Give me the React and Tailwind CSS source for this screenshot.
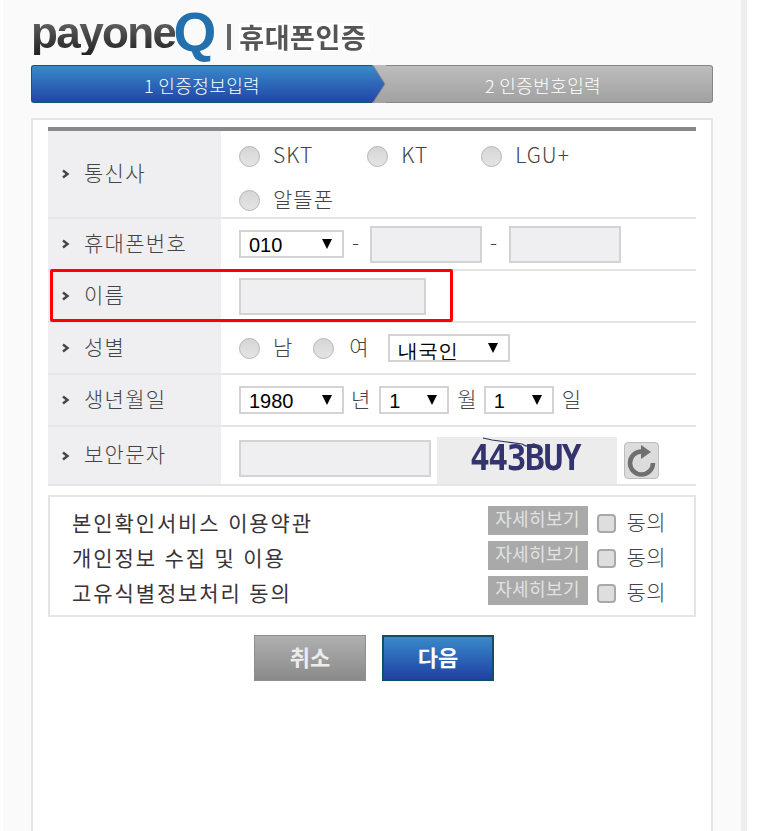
import React from 'react';

const KR = "font-['Noto_Sans_CJK_KR','Liberation_Sans',sans-serif]";

const Radio = () => (
  <span className="inline-block w-[21px] h-[21px] shrink-0 rounded-full border border-[#b4b4b4] bg-gradient-to-b from-[#d6d6d6] to-[#e4e4e4]"></span>
);

const Check = () => (
  <span className="inline-block w-[19px] h-[19px] mt-[3px] shrink-0 rounded-[4px] border-2 border-[#a9a9a9] bg-[#dedede]"></span>
);

const RadioItem = ({ label, className }) => (
  <label className={`flex items-start gap-[13px] h-[44px] ${className || ''}`}>
    <span className="mt-[4px] flex"><Radio /></span>
    <span className="text-[21px] leading-[24px] font-light text-[#444] tracking-[1px]">{label}</span>
  </label>
);

const Select = ({ value, options, width, arrow = 'right-[12px]', textClass = 'pl-[8px] pt-[1px]' }) => (
  <div className={`relative h-[28px] ${width}`}>
    <select
      defaultValue={value}
      className={`appearance-none w-full h-full border-2 border-[#d3d3d3] bg-white text-black text-[20px] leading-none font-['Liberation_Sans',sans-serif] rounded-none outline-none ${textClass}`}
    >
      {options.map((o) => <option key={o}>{o}</option>)}
    </select>
    <span className={`absolute top-[9px] ${arrow} w-0 h-0 border-l-[5px] border-r-[5px] border-t-[10px] border-l-transparent border-r-transparent border-t-black`}></span>
  </div>
);

const Input = ({ width, height = 'h-[37px]', className }) => (
  <input className={`${width} ${height} border-2 border-[#d3d3d3] bg-[#efeff1] outline-none ${className || ''}`} />
);

const Row = ({ label, height, children }) => (
  <div className={`flex ${height} border-b-2 border-[#e5e5e5]`}>
    <div className="w-[173px] shrink-0 bg-[#efeff1] flex items-center pl-[14px]">
      <svg width="8" height="10" viewBox="0 0 8 10" className="mr-[14px] shrink-0">
        <path d="M1 1.5 L5.5 5 L1 8.5" fill="none" stroke="#444" strokeWidth="2.4" />
      </svg>
      <span className="text-[21px] font-light text-[#444] tracking-[1.3px] leading-none -mt-[4px]">{label}</span>
    </div>
    <div className="flex-1 pl-[18px]">{children}</div>
  </div>
);

const Word = ({ children, className }) => (
  <span className={`text-[21px] font-light text-[#444] ${className || ''}`}>{children}</span>
);

const Term = ({ label }) => (
  <div className="flex items-center h-[35px]">
    <span className="flex-1 mt-[2px] text-[21px] leading-none text-[#3a3338] tracking-[1.9px] [word-spacing:1px]">{label}</span>
    <span className="w-[100px] h-[29px] mr-[9px] bg-[#a9a9a9] text-[#e2e2e2] text-[18px] leading-[25px] tracking-[0.4px] text-center -mt-[2px]">자세히보기</span>
    <Check />
    <span className="ml-[11px] mr-[28px] text-[21px] font-light text-[#444] tracking-[0.4px]">동의</span>
  </div>
);

export default function App() {
  const years = ['1980', '1981', '1982'];
  return (
    <div className={`w-[773px] h-[831px] overflow-hidden bg-white ${KR}`}>
      <div className="ml-[3px] w-[744px] h-full bg-[#fafafa] border-r-[6px] border-[#eeeeee] pl-[28px] pt-[12px]">
        {/* logo */}
        <div className="flex items-center h-[44px]">
          <span className="font-['Liberation_Sans',sans-serif] font-bold text-[44px] leading-[44px] tracking-[-1.6px] -mt-[3px] text-transparent bg-clip-text bg-gradient-to-b from-[#777] to-[#222] blur-[0.6px]">payone</span>
          <span className="font-['Liberation_Sans',sans-serif] font-bold text-[55px] leading-[44px] -ml-[2px] -mt-[5px] text-[#2370ad] blur-[0.5px]">Q</span>
          <span className="ml-[11px] w-[4px] h-[26px] mt-[6px] bg-[#666]"></span>
          <span className="ml-[8px] mt-[6px] w-[130px] h-[28px] bg-white text-[#555] text-[27px] font-bold tracking-[0.6px] leading-[28px] whitespace-nowrap blur-[0.4px]">휴대폰인증</span>
        </div>

        {/* steps */}
        <div className="flex w-[682px] h-[38px] mt-[9px] text-white text-[18px] font-light tracking-[0.4px]">
          <div className="w-[341px] h-full pt-[3px] rounded-l-[3px] border border-r-0 border-[#0f5a6e] bg-gradient-to-b from-[#3a8ac9] to-[#2444a8] flex items-center justify-center">
            1 인증정보입력
          </div>
          <svg width="14" height="38" viewBox="0 0 14 38" className="shrink-0">
            <defs>
              <linearGradient id="tip" x1="0" y1="0" x2="0" y2="1">
                <stop offset="0" stopColor="#3a8ac9" />
                <stop offset="1" stopColor="#2444a8" />
              </linearGradient>
              <linearGradient id="rest" x1="0" y1="0" x2="0" y2="1">
                <stop offset="0" stopColor="#bdbdbd" />
                <stop offset="1" stopColor="#a1a1a1" />
              </linearGradient>
            </defs>
            <rect width="14" height="38" fill="url(#rest)" />
            <path d="M0 0 L1 0 L13 19 L1 38 L0 38 Z" fill="url(#tip)" />
            <path d="M0 0.5 L1 0.5 L13 19 L1 37.5 L0 37.5" fill="none" stroke="#8a8a8a" strokeWidth="1" />
          </svg>
          <div className="flex-1 h-full pt-[3px] pr-[12px] rounded-r-[3px] border border-l-0 border-[#868686] bg-gradient-to-b from-[#bdbdbd] to-[#a1a1a1] flex items-center justify-center">
            2 인증번호입력
          </div>
        </div>

        {/* card */}
        <div className="relative w-[682px] h-[760px] mt-[15px] bg-white border-2 border-[#e5e5e5] pl-[15px] pt-[7px]">
          <div className="w-[648px]">
            <div className="h-[4px] bg-[#888888]"></div>

            <Row label="통신사" height="h-[88px]">
              <div className="flex flex-wrap pt-[11px]">
                <RadioItem label="SKT" className="mr-[54px]" />
                <RadioItem label="KT" className="mr-[53px]" />
                <RadioItem label="LGU+" className="mr-[54px]" />
                <RadioItem label="알뜰폰" />
              </div>
            </Row>

            <Row label="휴대폰번호" height="h-[52px]">
              <div className="flex items-center h-full">
                <Select value="010" options={['010', '011', '016']} width="w-[105px]" />
                <Word className="ml-[8px] mr-[11px] -mt-[4px]">-</Word>
                <Input width="w-[112px]" />
                <Word className="ml-[8px] mr-[12px] -mt-[4px]">-</Word>
                <Input width="w-[112px]" />
              </div>
            </Row>

            <Row label="이름" height="h-[52px]">
              <div className="flex items-center h-full">
                <Input width="w-[187px]" />
              </div>
            </Row>

            <Row label="성별" height="h-[52px]">
              <div className="flex items-center h-full">
                <Radio />
                <Word className="ml-[13px] mr-[21px] -mt-[3px]">남</Word>
                <Radio />
                <Word className="ml-[15px] mr-[19px] -mt-[3px]">여</Word>
                <Select value="내국인" options={['내국인', '외국인']} width="w-[122px]" textClass="pl-[8px] pt-[5px]" />
              </div>
            </Row>

            <Row label="생년월일" height="h-[52px]">
              <div className="flex items-center h-full">
                <Select value="1980" options={years} width="w-[105px]" />
                <Word className="ml-[7px] mr-[9px] -mt-[3px]">년</Word>
                <Select value="1" options={['1', '2', '3']} width="w-[70px]" />
                <Word className="ml-[8px] mr-[7px] -mt-[3px]">월</Word>
                <Select value="1" options={['1', '2', '3']} width="w-[70px]" />
                <Word className="ml-[8px] -mt-[3px]">일</Word>
              </div>
            </Row>

            <Row label="보안문자" height="h-[59px]">
              <div className="flex items-start h-full pt-[10px]">
                <Input width="w-[192px]" className="mt-[3px]" />
                <div className="relative w-[180px] h-[47px] ml-[6px] bg-[#ececec] flex items-center overflow-hidden pl-[33px]">
                  <svg width="180" height="47" viewBox="0 0 180 47" className="absolute left-0 top-0">
                    <path d="M46 1 L55 3 L70 5 L85 7 L89 9 L97 7 L103 10" fill="none" stroke="#2f2f6b" strokeWidth="1.2" />
                  </svg>
                  <span className="font-['DejaVu_Sans_Mono',monospace] font-bold text-[33px] leading-none tracking-[-1.5px] text-[#33336e] -mt-[6px] scale-y-110">443BUY</span>
                </div>
                <div className="ml-[7px] mt-[5px] w-[35px] h-[37px] rounded-[4px] border border-[#bdbdbd] bg-[#dcdcdc] flex items-center justify-center">
                  <svg width="32" height="34" viewBox="0 0 32 34">
                    <path d="M27 19 A11.5 11.5 0 1 1 15.5 7.5" fill="none" stroke="#6f6f6f" strokeWidth="4.5" />
                    <path d="M15 1 L25 8 L15 15 Z" fill="#6f6f6f" />
                  </svg>
                </div>
              </div>
            </Row>

            {/* terms */}
            <div className="mt-[9px] h-[122px] border-2 border-[#e5e5e5] pl-[22px] pt-[7px]">
              <Term label="본인확인서비스 이용약관" />
              <Term label="개인정보 수집 및 이용" />
              <Term label="고유식별정보처리 동의" />
            </div>

            {/* buttons */}
            <div className="flex mt-[18px] ml-[206px] gap-[16px]">
              <button className="w-[112px] h-[46px] pb-[3px] border border-[#8f8f8f] bg-gradient-to-b from-[#b0b0b0] to-[#8a8a8a] text-[#ececec] text-[22px] font-bold">취소</button>
              <button className="w-[112px] h-[46px] pb-[3px] border-2 border-[#0f5068] bg-gradient-to-b from-[#3a8ac9] to-[#2240a4] text-white text-[22px] font-bold">다음</button>
            </div>
          </div>

          {/* red highlight over the name row */}
          <div className="absolute left-[17px] top-[149px] w-[403px] h-[53px] border-[3px] border-[#ff0000] rounded-[2px]"></div>
        </div>
      </div>
    </div>
  );
}
